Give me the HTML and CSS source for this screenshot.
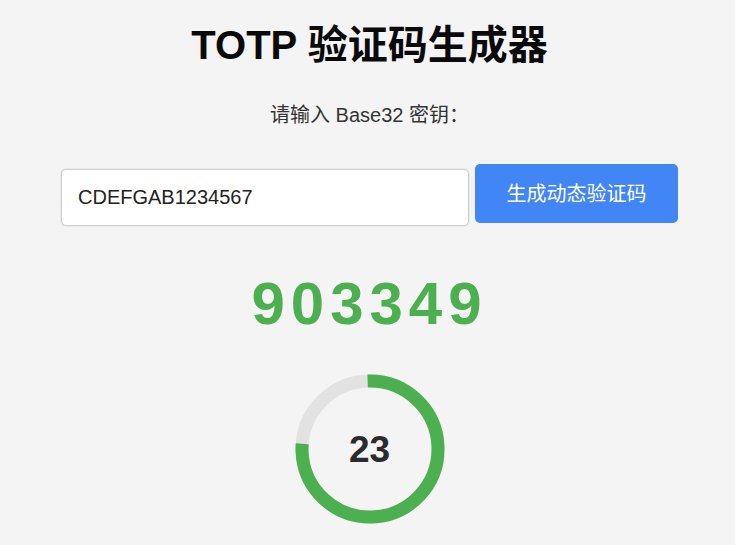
FILE: index.html
```html
<!DOCTYPE html>
<html lang="zh-CN">
<head>
<meta charset="utf-8">
<title>TOTP 验证码生成器</title>
<link rel="stylesheet" href="styles.css">
</head>
<body>
<main class="app">
  <h1 class="title">TOTP 验证码生成器</h1>
  <p class="label">请输入 Base32 密钥：</p>
  <div class="form-row">
    <input class="secret" type="text" value="CDEFGAB1234567">
    <button class="generate" type="button">生成动态验证码</button>
  </div>
  <div class="code">903349</div>
  <div class="timer">
    <svg class="ring" width="150" height="150" viewBox="0 0 150 150">
      <circle class="ring-track" cx="75" cy="75" r="68"></circle>
      <circle class="ring-progress" cx="75" cy="75" r="68" stroke-dasharray="327.7 427.26" transform="rotate(-92 75 75)"></circle>
    </svg>
    <span class="seconds">23</span>
  </div>
</main>
</body>
</html>
```

FILE: styles.css
```css
html, body {
  margin: 0;
  padding: 0;
  background: #f4f4f4;
}

body {
  padding-left: 4px;
  font-family: "Liberation Sans", Arial, "Noto Sans CJK SC", sans-serif;
  color: #333;
}

.app {
  display: flex;
  flex-direction: column;
  align-items: center;
  padding-top: 22px;
}

.title {
  margin: 0;
  font-size: 40px;
  line-height: 46px;
  font-weight: bold;
  color: #0a0a0a;
}

.label {
  margin: 35px 0 0;
  font-size: 20px;
  line-height: 24px;
  color: #333;
}

.form-row {
  margin-top: 37px;
  display: flex;
  align-items: flex-start;
  gap: 6px;
}

.secret {
  box-sizing: border-box;
  width: 408px;
  height: 57px;
  margin-top: 5px;
  padding: 0 16px;
  border: 1px solid #cfcfcf;
  border-radius: 5px;
  box-shadow: 0 0 0 1px #e9e9e9;
  background: #fff;
  font-family: "Liberation Sans", Arial, sans-serif;
  font-size: 20px;
  color: #222;
  outline: none;
}

.generate {
  box-sizing: border-box;
  width: 203px;
  height: 59px;
  padding: 0 0 2px;
  border: none;
  border-radius: 5px;
  background: #4285f4;
  color: #fff;
  font-family: "Liberation Sans", "Noto Sans CJK SC", sans-serif;
  font-size: 20px;
}

.code {
  margin-top: 43px;
  font-size: 60px;
  line-height: 70px;
  font-weight: bold;
  letter-spacing: 6px;
  color: #4caf50;
}

.timer {
  margin-top: 35px;
  display: grid;
  place-items: center;
}

.ring,
.seconds {
  grid-area: 1 / 1;
}

.ring-track {
  fill: none;
  stroke: #e2e2e2;
  stroke-width: 13;
}

.ring-progress {
  fill: none;
  stroke: #4caf50;
  stroke-width: 13;
}

.seconds {
  font-size: 37px;
  font-weight: bold;
  color: #2b2b2b;
  line-height: 1;
}
```
